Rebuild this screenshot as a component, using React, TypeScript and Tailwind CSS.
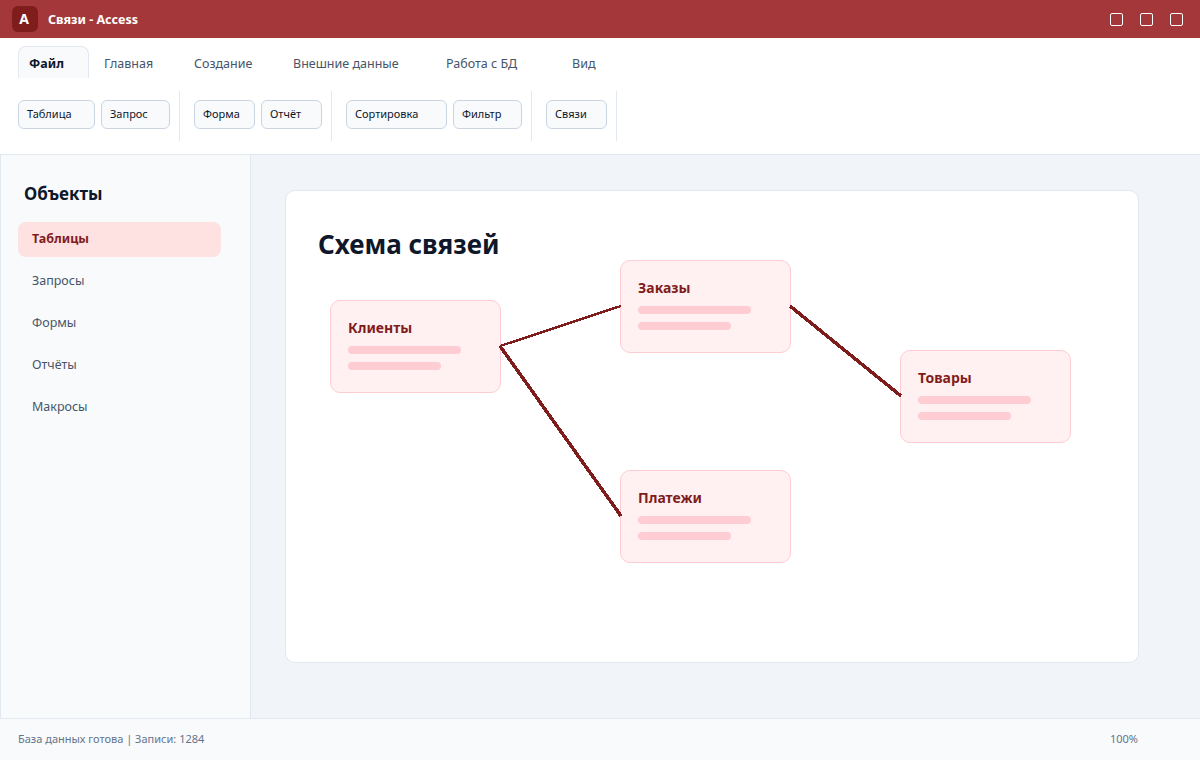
const font = { fontFamily: '"Noto Sans", sans-serif' }

const tabs = [
  { label: "Главная", className: "ml-[15px] w-[49px]" },
  { label: "Создание", className: "ml-[41px] w-[59px]" },
  { label: "Внешние данные", className: "ml-[40px] w-[105px]" },
  { label: "Работа с БД", className: "ml-[48px] w-[72px]" },
  { label: "Вид", className: "ml-[54px] w-[22px]" },
]

const ribbonGroups = [
  [
    { label: "Таблица", width: "w-[77px]" },
    { label: "Запрос", width: "w-[69px]" },
  ],
  [
    { label: "Форма", width: "w-[61px]" },
    { label: "Отчёт", width: "w-[61px]" },
  ],
  [
    { label: "Сортировка", width: "w-[101px]" },
    { label: "Фильтр", width: "w-[69px]" },
  ],
  [{ label: "Связи", width: "w-[61px]" }],
]

const objects = ["Запросы", "Формы", "Отчёты", "Макросы"]

const nodes = [
  { title: "Клиенты", position: "left-[44px] top-[109px]" },
  { title: "Заказы", position: "left-[334px] top-[69px]" },
  { title: "Товары", position: "left-[614px] top-[159px]" },
  { title: "Платежи", position: "left-[334px] top-[279px]" },
]

function WindowButton() {
  return <div className="h-[13px] w-[13px] rounded-[2px] border-[1.5px] border-white" />
}

function DiagramNode({ title, position }: { title: string; position: string }) {
  return (
    <div className={`absolute ${position} h-[93px] w-[171px] rounded-[10px] border border-[#fecdd3] bg-[#fff1f2] px-[17px] pt-[17px]`}>
      <div className="h-5 text-sm leading-5 font-bold text-[#7f1d1d]">{title}</div>
      <div className="mt-[8px] h-2 w-[113px] rounded-full bg-[#fecdd3]" />
      <div className="mt-[8px] h-2 w-[93px] rounded-full bg-[#fecdd3]" />
    </div>
  )
}

export default function App() {
  return (
    <div className="flex h-[760px] w-[1200px] flex-col overflow-hidden bg-white" style={font}>
      {/* Title bar */}
      <div className="flex h-[38px] shrink-0 items-center bg-[#a4373a] pr-[17px] pl-3">
        <div className="flex h-[26px] w-[26px] items-center justify-center rounded-md bg-[#7f1d1d] pr-[2px] text-sm font-bold text-white">A</div>
        <div className="ml-[10px] pt-[2px] text-[12.5px] font-bold text-white">Связи - Access</div>
        <div className="ml-auto flex gap-[17px]">
          <WindowButton />
          <WindowButton />
          <WindowButton />
        </div>
      </div>

      {/* Ribbon */}
      <div className="h-[117px] shrink-0 border-b border-[#e2e8f0] bg-white pl-[18px]">
        <div className="flex h-[40px] items-start pt-2 text-[12.5px] text-[#475569]">
          <div className="flex h-[32px] w-[71px] items-center rounded-t-lg border border-b-0 border-[#e2e8f0] bg-[#f8fafc] pt-[4px] pl-[10px] font-bold text-[#0f172a]">Файл</div>
          {tabs.map((tab) => (
            <div key={tab.label} className={`flex h-[34px] items-center whitespace-nowrap pt-[2px] ${tab.className}`}>
              {tab.label}
            </div>
          ))}
        </div>
        <div className="mt-[13px] flex">
          {ribbonGroups.map((group, index) => (
            <div key={index} className="mr-[14px] flex h-[50px] items-start gap-[6px] border-r border-[#e2e8f0] pt-[9px] pr-[9px]">
              {group.map((item) => (
                <div key={item.label} className={`flex h-[29px] items-center rounded-md border border-[#cbd5e1] bg-[#f8fafc] pl-2 text-[11px] text-[#0f172a] ${item.width}`}>
                  {item.label}
                </div>
              ))}
            </div>
          ))}
        </div>
      </div>

      <div className="flex min-h-0 flex-1">
        {/* Sidebar */}
        <div className="w-[251px] shrink-0 border-x border-[#e2e8f0] bg-[#f8fafc] pt-[27px] pl-[17px]">
          <div className="pl-[6px] text-[17px] leading-6 font-bold text-[#0f172a]">Объекты</div>
          <div className="mt-[16px] flex w-[203px] flex-col gap-[7px] text-[12.5px]">
            <div className="flex h-[35px] items-center rounded-lg bg-[#fee2e2] pl-[14px] font-bold text-[#7f1d1d]">Таблицы</div>
            {objects.map((item) => (
              <div key={item} className="flex h-[35px] items-center pl-[14px] text-[#475569]">{item}</div>
            ))}
          </div>
        </div>

        {/* Canvas */}
        <div className="flex-1 bg-[#f1f5f9] pt-[35px] pl-[34px]">
          <div className="relative h-[473px] w-[854px] rounded-[10px] border border-[#e2e8f0] bg-white pt-[31px] pl-[32px]">
            <h1 className="text-[26px] leading-[44px] font-bold text-[#0f172a]">Схема связей</h1>
            {nodes.map((node) => (
              <DiagramNode key={node.title} {...node} />
            ))}
            <svg className="absolute top-[-1px] left-[-1px]" width="854" height="473" fill="none" stroke="#7f1d1d" shapeRendering="crispEdges">
              <line x1="215" y1="156" x2="336" y2="116" strokeWidth="2.5" />
              <line x1="215" y1="156" x2="336" y2="326" strokeWidth="3.5" />
              <line x1="505" y1="116" x2="616" y2="206" strokeWidth="3.5" />
            </svg>
          </div>
        </div>
      </div>

      {/* Status bar */}
      <div className="flex h-[42px] shrink-0 items-center justify-between border-t border-[#e2e8f0] bg-[#f8fafc] pr-[62px] pl-[18px] text-[11px] text-[#64748b]">
        <span>База данных готова | Записи: 1284</span>
        <span>100%</span>
      </div>
    </div>
  )
}
